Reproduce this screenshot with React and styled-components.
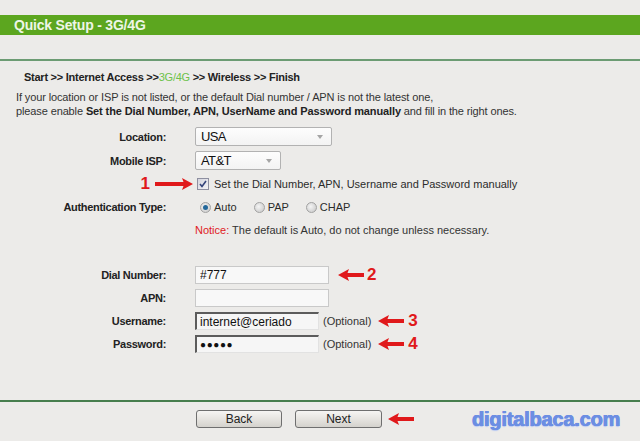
import React from 'react';
import styled, { createGlobalStyle } from 'styled-components';

const Global = createGlobalStyle`
  html, body { margin: 0; padding: 0; background: #ecebe9; }
  body { font-family: "Liberation Sans", Arial, sans-serif; }
  * { box-sizing: border-box; }
`;

const Page = styled.div`
  width: 640px;
  height: 441px;
  overflow: hidden;
  background: #ecebe9;
  display: flex;
  flex-direction: column;
  color: #2b2b2b;
  font-size: 11px;
  letter-spacing: 0;
`;

const TitleBar = styled.div`
  margin-top: 15px;
  height: 20px;
  background: #5ca61f;
  color: #eef6e6;
  font-weight: bold;
  font-size: 14px;
  letter-spacing: -0.2px;
  line-height: 20px;
  padding-left: 14px;
`;

const Rule = styled.div`
  height: 2px;
  flex-shrink: 0;
  background: ${(p) => p.$color};
  margin-top: ${(p) => p.$mt}px;
`;

const Breadcrumb = styled.div`
  margin-top: 9px;
  padding-left: 24px;
  line-height: 14px;
  font-weight: bold;
  letter-spacing: -0.25px;
  color: #222;
`;

const Current = styled.span`
  color: #6cc24a;
  font-weight: normal;
`;

const Intro = styled.div`
  margin-top: 6px;
  padding-left: 16px;
  line-height: 14px;
  letter-spacing: -0.12px;
  color: #333;
  b { color: #222; }
`;

const Form = styled.div`
  margin-top: 9px;
  display: flex;
  flex-direction: column;
  gap: 5px;
`;

const Row = styled.div`
  display: grid;
  grid-template-columns: 166px 1fr;
  column-gap: 29px;
  align-items: center;
  height: ${(p) => p.$h || 18}px;
  margin-top: ${(p) => p.$mt || 0}px;
`;

const Label = styled.div`
  text-align: right;
  font-weight: bold;
  letter-spacing: -0.3px;
  color: #222;
  white-space: nowrap;
`;

const AnnotCell = styled.div`
  display: flex;
  justify-content: flex-end;
  align-items: center;
  margin-right: -27px;
  gap: 5px;
`;

const Control = styled.div`
  display: flex;
  align-items: center;
  white-space: nowrap;
`;

const SelectBox = styled.div`
  position: relative;
  width: ${(p) => p.$w}px;
  height: 19px;
  border: 1px solid #b2b2b2;
  border-radius: 2px;
  background: linear-gradient(#fdfdfd, #f3f3f3);
  font-size: 13px;
  letter-spacing: -0.6px;
  color: #111;
  line-height: 17px;
  padding-left: 5px;
`;

const Caret = styled.span`
  position: absolute;
  right: 8px;
  top: 7px;
  width: 0;
  height: 0;
  border-left: 3px solid transparent;
  border-right: 3px solid transparent;
  border-top: 4px solid #a5a5a5;
`;

const CheckBox = styled.span`
  width: 12px;
  height: 12px;
  margin-left: 2px;
  margin-right: 5px;
  border: 1px solid #8e8fa0;
  background: linear-gradient(135deg, #d4d5de, #f2f2f6);
  display: inline-flex;
  align-items: center;
  justify-content: center;
`;

const RadioItem = styled.span`
  display: inline-flex;
  align-items: center;
  margin-left: ${(p) => p.$ml}px;
`;

const Radio = styled.span`
  width: 11px;
  height: 11px;
  border-radius: 50%;
  border: 1px solid #a2a2a2;
  background: radial-gradient(circle at 40% 40%, #f4f4f4, #c4c4c4);
  margin-right: 3px;
  display: inline-flex;
  align-items: center;
  justify-content: center;
  &::after {
    content: '';
    display: ${(p) => (p.$on ? 'block' : 'none')};
    width: 5px;
    height: 5px;
    border-radius: 50%;
    background: #22679a;
  }
`;

const Notice = styled.span`
  color: #333;
  b { color: #e0201e; font-weight: normal; }
`;

const Input = styled.input`
  width: ${(p) => p.$w}px;
  height: 18px;
  margin: 0;
  padding: 0 0 0 ${(p) => (p.$inset ? 3 : 4)}px;
  font-family: "Liberation Sans", "DejaVu Sans", Arial, sans-serif;
  font-size: ${(p) => (p.$dots ? 10 : 12)}px;
  letter-spacing: ${(p) => (p.$dots ? 0.6 : 0)}px;
  color: #111;
  outline: none;
  background: ${(p) => (p.$inset ? '#f6f6f6' : '#f8f8f8')};
  border: 1px solid #c9c9c9;
  ${(p) =>
    p.$inset &&
    `border-top: 2px solid #5c5c5c; border-left: 2px solid #5c5c5c; border-right: 1px solid #e2e2e2; border-bottom: 1px solid #e2e2e2;`}
`;

const Optional = styled.span`
  margin-left: 4px;
  color: #333;
`;

const Num = styled.span`
  color: #e0191b;
  font-weight: bold;
  font-size: 17px;
  letter-spacing: 0;
  line-height: 18px;
  margin-left: ${(p) => p.$ml || 0}px;
`;

const ArrowSvg = styled.svg`
  display: block;
  flex-shrink: 0;
  margin-left: ${(p) => p.$ml || 0}px;
`;

const Arrow = ({ dir = 'left', w = 26, ml }) => (
  <ArrowSvg width={w} height="12" viewBox={`0 0 ${w} 12`} $ml={ml}>
    {dir === 'left' ? (
      <path d={`M0 6 L11 0 L9.5 4 L${w} 4 L${w} 8 L9.5 8 L11 12 Z`} fill="#e0191b" />
    ) : (
      <path d={`M${w} 6 L${w - 11} 0 L${w - 9.5} 4 L0 4 L0 8 L${w - 9.5} 8 L${w - 11} 12 Z`} fill="#e0191b" />
    )}
  </ArrowSvg>
);

const Footer = styled.div`
  margin-top: 8px;
  height: 18px;
  display: flex;
  align-items: center;
  padding-left: 196px;
`;

const Button = styled.button`
  width: ${(p) => p.$w}px;
  height: 18px;
  margin: 0 0 0 ${(p) => p.$ml || 0}px;
  padding: 0;
  border: 1px solid #6f6f6f;
  border-radius: 3px;
  background: linear-gradient(#f6f5f3 0%, #e6e4e0 50%, #d4d2cd 100%);
  font-family: "Liberation Sans", Arial, sans-serif;
  font-size: 12px;
  color: #222;
  line-height: 16px;
`;

const Watermark = styled.div`
  margin-left: 58px;
  font-family: "Liberation Sans", Arial, sans-serif;
  font-weight: bold;
  font-size: 20px;
  letter-spacing: -0.2px;
  color: #6c8ee3;
  text-shadow: 0.4px 0 0 #6c8ee3, -0.4px 0 0 #6c8ee3, 0 1px 1px #b8c8f2;
`;

export default function App() {
  return (
    <Page>
      <Global />
      <TitleBar>Quick Setup - 3G/4G</TitleBar>
      <Rule $color="#6b9b73" $mt={24} />
      <Breadcrumb>
        Start &gt;&gt; Internet Access &gt;&gt;<Current>3G/4G</Current> &gt;&gt; Wireless &gt;&gt; Finish
      </Breadcrumb>
      <Intro>
        If your location or ISP is not listed, or the default Dial number / APN is not the latest one,
        <br />
        please enable <b>Set the Dial Number, APN, UserName and Password manually</b> and fill in the right ones.
      </Intro>
      <Form>
        <Row $h={19}>
          <Label>Location:</Label>
          <Control>
            <SelectBox $w={137}>
              USA
              <Caret />
            </SelectBox>
          </Control>
        </Row>
        <Row $h={19}>
          <Label>Mobile ISP:</Label>
          <Control>
            <SelectBox $w={86}>
              AT&amp;T
              <Caret />
            </SelectBox>
          </Control>
        </Row>
        <Row>
          <AnnotCell>
            <Num>1</Num>
            <Arrow dir="right" w={38} />
          </AnnotCell>
          <Control>
            <CheckBox>
              <svg width="8" height="8" viewBox="0 0 8 8">
                <path d="M1 4 L3 6.5 L7 1" stroke="#33437a" strokeWidth="1.6" fill="none" />
              </svg>
            </CheckBox>
            Set the Dial Number, APN, Username and Password manually
          </Control>
        </Row>
        <Row>
          <Label>Authentication Type:</Label>
          <Control>
            <RadioItem $ml={5}>
              <Radio $on />
              Auto
            </RadioItem>
            <RadioItem $ml={17}>
              <Radio />
              PAP
            </RadioItem>
            <RadioItem $ml={17}>
              <Radio />
              CHAP
            </RadioItem>
          </Control>
        </Row>
        <Row>
          <div />
          <Control>
            <Notice>
              <b>Notice:</b> The default is Auto, do not change unless necessary.
            </Notice>
          </Control>
        </Row>
        <Row $mt={22}>
          <Label>Dial Number:</Label>
          <Control>
            <Input $w={134} value="#777" readOnly />
            <Arrow dir="left" ml={9} />
            <Num $ml={3}>2</Num>
          </Control>
        </Row>
        <Row>
          <Label>APN:</Label>
          <Control>
            <Input $w={134} value="" readOnly />
          </Control>
        </Row>
        <Row>
          <Label>Username:</Label>
          <Control>
            <Input $w={124} $inset value="internet@ceriado" readOnly />
            <Optional>(Optional)</Optional>
            <Arrow dir="left" ml={7} />
            <Num $ml={4}>3</Num>
          </Control>
        </Row>
        <Row>
          <Label>Password:</Label>
          <Control>
            <Input $w={124} $inset $dots value={'\u25CF\u25CF\u25CF\u25CF\u25CF'} readOnly />
            <Optional>(Optional)</Optional>
            <Arrow dir="left" ml={7} />
            <Num $ml={4}>4</Num>
          </Control>
        </Row>
      </Form>
      <Rule $color="#477e4e" $mt={47} />
      <Footer>
        <Button $w={86}>Back</Button>
        <Button $w={87} $ml={13}>Next</Button>
        <Arrow dir="left" ml={6} />
        <Watermark>digitalbaca.com</Watermark>
      </Footer>
    </Page>
  );
}
